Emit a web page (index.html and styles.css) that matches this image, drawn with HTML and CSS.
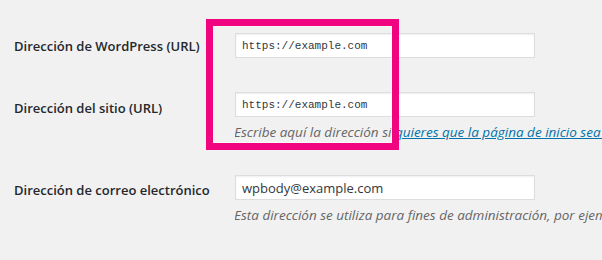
FILE: index.html
```html
<!DOCTYPE html>
<html lang="es">
<head>
    <meta charset="UTF-8">
    <title>Ajustes generales</title>
    <link rel="stylesheet" href="styles.css">
</head>
<body>
    <div class="form">
        <div class="row">
            <label class="label" for="siteurl">Dirección de WordPress (URL)</label>
            <div class="field">
                <input class="input code" id="siteurl" type="text" value="https://example.com">
            </div>
        </div>
        <div class="row row-home">
            <label class="label" for="home">Dirección del sitio (URL)</label>
            <div class="field">
                <input class="input code" id="home" type="text" value="https://example.com">
                <p class="description">Escribe aquí la dirección si <a href="#">quieres que la página de inicio sea diferente</a></p>
            </div>
        </div>
        <div class="row row-email">
            <label class="label" for="email">Dirección de correo electrónico</label>
            <div class="field">
                <input class="input" id="email" type="text" value="wpbody@example.com">
                <p class="description">Esta dirección se utiliza para fines de administración, por ejemplo</p>
            </div>
        </div>
    </div>
    <div class="highlight"></div>
</body>
</html>
```

FILE: styles.css
```css
html, body { margin: 0; height: 100%; overflow: hidden; }
body { background: #f1f1f1; color: #23282d; font-family: "Open Sans", "Noto Sans", sans-serif; font-size: 13px; position: relative; }
.form { padding: 33px 0 0 14px; }
.row { display: flex; }
.row + .row { margin-top: 34px; }
.label { width: 221px; flex: none; padding-top: 3px; font-weight: 600; font-size: 13px; line-height: 20px; }
.row-home .label { padding-top: 6px; }
.row-email { margin-top: 34px; }
.row-email .label { padding-top: 5px; }
.field { flex: none; width: 400px; overflow: hidden; }
.input { display: block; box-sizing: border-box; width: 300px; height: 25px; margin: 0; padding: 0 6px; border: 1px solid #ddd; background: #fff; color: #32373c; box-shadow: inset 0 1px 2px rgba(0,0,0,.07); font-family: "Open Sans", "Noto Sans", sans-serif; font-size: 13px; outline: none; }
.code { font-family: "Liberation Mono", monospace; font-size: 11px; }
.description { margin: 6px 0 0 -1px; font-style: italic; color: #666; font-size: 13.5px; line-height: 18px; white-space: nowrap; }
.description a { color: #0073aa; }
.highlight { position: absolute; left: 206px; top: 19px; width: 193px; height: 131px; box-sizing: border-box; border: 7px solid #f0047f; box-shadow: inset 0 0 0 1px rgba(255,255,255,.5); }
```
